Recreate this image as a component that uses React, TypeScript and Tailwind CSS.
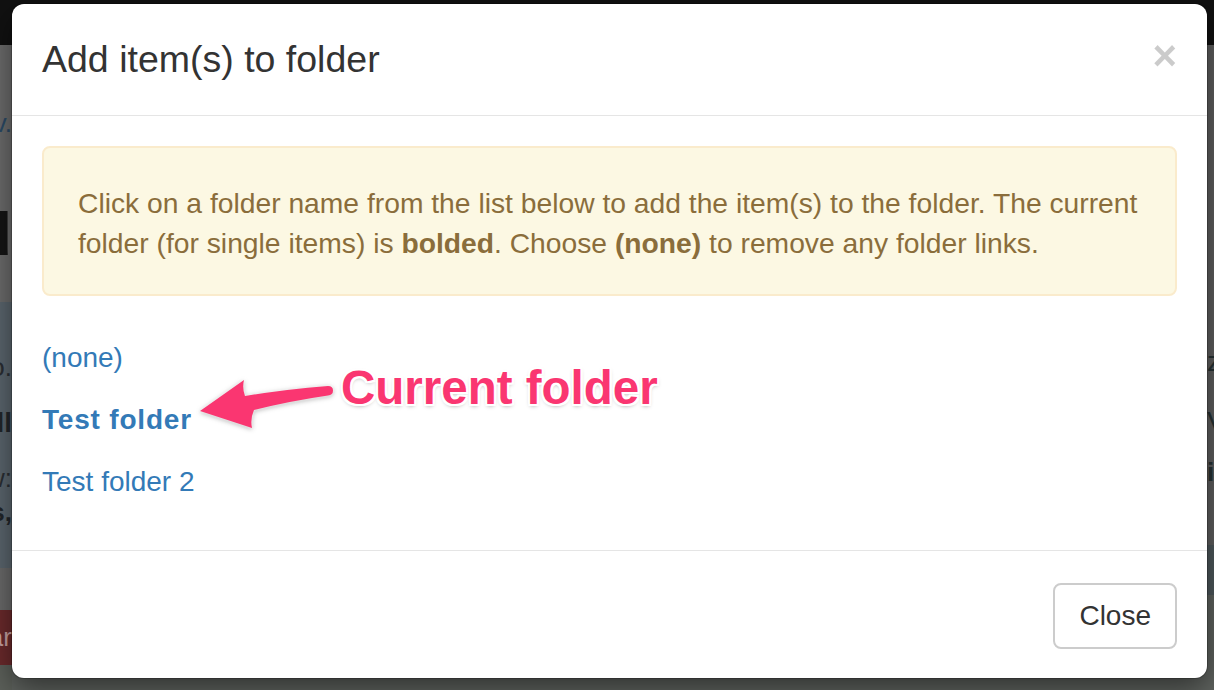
import React from "react";

const font = "font-['Liberation_Sans',Helvetica,Arial,sans-serif]";

function Backdrop() {
  return (
    <div className="flex flex-col h-full">
      {/* dimmed navbar */}
      <div className="h-[45px] shrink-0 bg-[#111111]" />

      <div className="flex flex-1">
        {/* visible strip of the page on the left */}
        <div className="w-[12px] flex flex-col bg-[#6c6c6c]">
          <div className="h-[68px]" />
          <div className="h-[20px] flex justify-end items-center whitespace-nowrap text-[26px] text-[#2b4a66]">
            www.v.
          </div>
          <div className="h-[75px]" />
          <div className="h-[50px] flex justify-end items-center whitespace-nowrap text-[62px] font-bold text-[#151515]">
            Word
          </div>
          <div className="h-[44px]" />
          <div className="h-[266px] bg-[#5b666e] flex flex-col">
            <div className="h-[50px]" />
            <div className="h-[30px] flex justify-end items-center whitespace-nowrap text-[26px] text-[#2a2e33]">
              no.
            </div>
            <div className="h-[26px]" />
            <div className="h-[30px] flex justify-end items-center whitespace-nowrap text-[28px] font-bold text-[#22262a]">
              Bill
            </div>
            <div className="h-[26px]" />
            <div className="h-[28px] flex justify-end items-center whitespace-nowrap text-[26px] text-[#2a2e33]">
              view:
            </div>
            <div className="h-[6px]" />
            <div className="h-[28px] flex justify-end items-center whitespace-nowrap text-[26px] font-bold text-[#22262a]">
              items,
            </div>
          </div>
          <div className="h-[42px] bg-[#6a6a6a]" />
          <div className="h-[55px] bg-[#6b2a2c] flex justify-end items-center whitespace-nowrap text-[26px] text-[#c9a3a3]">
            Clear
          </div>
          <div className="flex-1 bg-[#5c605a]" />
        </div>

        <div className="flex-1" />

        {/* visible strip of the page on the right */}
        <div className="w-[7px] flex flex-col bg-[#5f5f5f]">
          <div className="h-[302px]" />
          <div className="h-[30px] flex items-center whitespace-nowrap text-[28px] text-[#263234]">
            zip
          </div>
          <div className="h-[30px]" />
          <div className="h-[30px] flex items-center whitespace-nowrap text-[28px] text-[#263234]">
            View
          </div>
          <div className="h-[22px]" />
          <div className="h-[26px] flex items-center whitespace-nowrap text-[26px] font-bold text-[#263234]">
            is
          </div>
          <div className="h-[60px]" />
          <div className="h-[50px] bg-[#4e585c]" />
          <div className="flex-1 bg-[#5f635f]" />
        </div>
      </div>
    </div>
  );
}

export default function App() {
  return (
    <div className={`relative w-[1214px] h-[690px] overflow-hidden bg-[#5f635f] ${font}`}>
      <Backdrop />

      {/* Modal */}
      <div className="absolute inset-0 flex items-start pl-[12px] pt-[4px]">
        <div className="w-[1195px] bg-white rounded-[12px] shadow-[0_0_0_1px_rgba(0,0,0,0.2),0_10px_30px_rgba(0,0,0,0.5)] flex flex-col">
          {/* Header */}
          <div className="flex items-start justify-between px-[30px] py-[30px] border-b border-[#e5e5e5]">
            <h4 className="text-[37.5px] leading-[51px] text-[#333333]">Add item(s) to folder</h4>
            <button className="mt-[1px] text-[42px] leading-none font-bold text-black opacity-20">
              ×
            </button>
          </div>

          {/* Body */}
          <div className="px-[30px] pt-[30px] pb-[48px]">
            <div className="border-2 border-[#faebcc] bg-[#fcf8e3] rounded-[8px] pl-[34px] pr-[30px] pt-[35px] pb-[31px] text-[28.25px] leading-[40px] text-[#8a6d3b]">
              Click on a folder name from the list below to add the item(s) to the folder. The current
              <br />
              folder (for single items) is <b>bolded</b>. Choose <b>(none)</b> to remove any folder links.
            </div>

            <div className="mt-[42px] flex flex-col gap-[22px] text-[28px] leading-[40px] text-[#337ab7]">
              <a>(none)</a>
              <a className="font-bold tracking-[0.8px]">Test folder</a>
              <a>Test folder 2</a>
            </div>
          </div>

          {/* Footer */}
          <div className="flex justify-end px-[30px] pt-[32px] pb-[29px] border-t border-[#e5e5e5]">
            <button className="border-2 border-[#cccccc] rounded-[8px] bg-white px-[24px] py-[11px] text-[28px] leading-[40px] text-[#333333]">
              Close
            </button>
          </div>
        </div>
      </div>

      {/* Annotation arrow */}
      <svg
        className="absolute left-[190px] top-[370px] w-[150px] h-[70px] [filter:drop-shadow(0_0_1.5px_white)_drop-shadow(0_1px_2px_rgba(0,0,0,0.3))]"
        viewBox="0 0 150 70"
      >
        <path
          d="M10 41 L54 10 Q52 18 55 26 Q98 19 138 16 Q143 16 143 20.5 Q143 25 138 25.5 Q100 31 64 40 Q60 49 62 58 Z"
          fill="#fa3671"
        />
      </svg>

      {/* Annotation label */}
      <div className="absolute left-[341px] top-[364px] text-[47.5px] leading-[47px] font-bold whitespace-nowrap text-[#fa3671] [text-shadow:2px_0_0_#fff,-2px_0_0_#fff,0_2px_0_#fff,0_-2px_0_#fff,2px_2px_0_#fff,-2px_-2px_0_#fff,2px_-2px_0_#fff,-2px_2px_0_#fff,0_2px_4px_rgba(0,0,0,0.35)]">
        Current folder
      </div>
    </div>
  );
}
